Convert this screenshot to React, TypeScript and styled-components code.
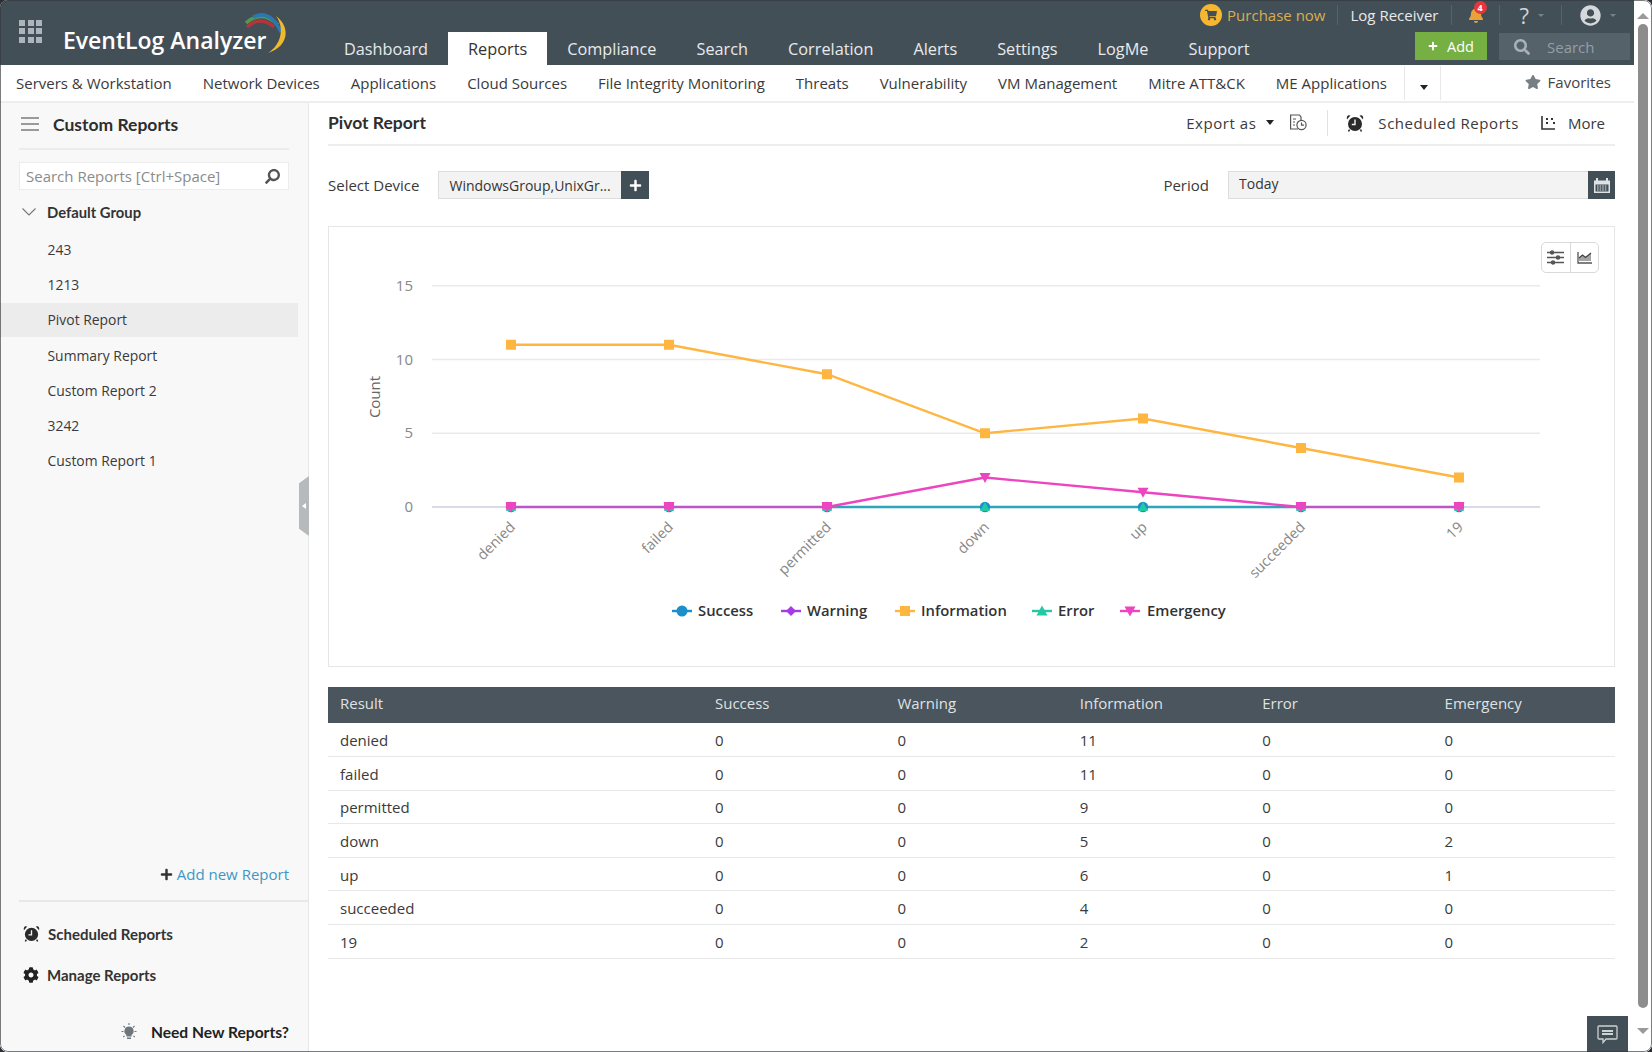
import React from "react";
import styled, { createGlobalStyle } from "styled-components";
import { FaCog, FaStar, FaPlus, FaBell, FaUserCircle, FaShoppingCart, FaSearch } from "react-icons/fa";

const Global = createGlobalStyle`
  html, body { margin: 0; padding: 0; background: #2b2f33; overflow: hidden; }
  * { box-sizing: border-box; }
  body { font-family: "Open Sans", "Liberation Sans", sans-serif; color: #3c3c3c; font-size: 14px; }
`;

const Frame = styled.div`
  width: 1652px; height: 1052px; display: flex; background: #fff;
  border-radius: 8px; overflow: hidden; position: relative;
  &::after {
    content: ""; position: absolute; inset: 0; border: 1px solid rgba(50, 55, 60, .65); border-radius: 8px; pointer-events: none;
  }
`;
const Main = styled.div`width: 1634px; height: 1052px; display: flex; flex-direction: column;`;

const Header = styled.header`height: 65px; background: #434f57; display: flex; flex-shrink: 0;`;
const Brand = styled.div`width: 324px; display: flex; align-items: center; padding-left: 19px; gap: 21px; flex-shrink: 0; position: relative;`;
const GridIcon = styled.div`
  display: grid; grid-template-columns: repeat(3, 6px); grid-auto-rows: 6px; gap: 2.5px; margin-top: -3px;
  span { background: #aeb5ba; }
`;
const Wordmark = styled.div`font-size: 23px; font-weight: 600; color: #fff; margin-top: 14px; white-space: nowrap;`;
const Swoosh = styled.svg`position: absolute; left: 240px; top: 10px;`;
const Tabs = styled.nav`display: flex; align-self: flex-end; height: 33px; flex-shrink: 0;`;
const Tab = styled.div<{ $active?: boolean }>`
  padding: 0 20px; font-size: 16.3px; display: flex; align-items: center; white-space: nowrap;
  color: ${p => (p.$active ? "#333" : "#e8eaeb")}; background: ${p => (p.$active ? "#fff" : "transparent")};
`;
const HeaderRight = styled.div`flex: 1; min-width: 0; display: flex; flex-direction: column; align-items: flex-end;`;
const TopRow = styled.div`height: 32px; display: flex; align-items: center; flex-shrink: 0; padding-right: 13px; padding-bottom: 2px; white-space: nowrap;`;
const TopDivider = styled.span`width: 1px; height: 20px; background: #56626a; margin: 0 12px;`;
const CartBadge = styled.span`
  width: 22px; height: 22px; border-radius: 50%; background: #f5b72f; color: #434f57;
  display: flex; align-items: center; justify-content: center; font-size: 12px; margin-right: 5px;
`;
const PurchaseText = styled.span`color: #d9ad52; font-size: 15px;`;
const LogReceiver = styled.span`color: #e8eaeb; font-size: 15px;`;
const BellWrap = styled.span`position: relative; color: #e9a13a; font-size: 16px; display: flex; margin: 0 3px 0 4px;`;
const BellBadge = styled.span`
  position: absolute; left: 6px; top: -6px; width: 13px; height: 13px; border-radius: 50%; background: #e8353c;
  color: #fff; font-size: 9px; font-weight: 700; display: flex; align-items: center; justify-content: center;
`;
const Help = styled.span`color: #cfd4d7; font-size: 22px; line-height: 1; margin-left: 8px;`;
const TinyCaret = styled.span`
  width: 0; height: 0; border: 3px solid transparent; border-top-color: #77838a; margin: 3px 5px 0 9px;
`;
const Avatar = styled.span`color: #d5d9dc; font-size: 21px; display: flex; margin-left: 6px;`;
const BottomRow = styled.div`display: flex; gap: 12px; padding-right: 4px; align-items: flex-end;`;
const AddButton = styled.div`
  width: 72px; height: 28px; background: #76b043; color: #fff; display: flex; align-items: center;
  justify-content: center; gap: 9px; font-size: 14.5px; svg { font-size: 10px; }
`;
const SearchBox = styled.div`
  width: 131px; height: 27px; background: #56626a; color: #949ea4; display: flex; align-items: center;
  padding-left: 15px; gap: 17px; font-size: 15px; svg { font-size: 16px; color: #a9b1b6; }
`;

const SubNav = styled.nav`
  height: 38px; display: flex; align-items: center; padding-left: 16px; gap: 31px;
  border-bottom: 2px solid #eeeeee; flex-shrink: 0; background: #fff;
`;
const SubItem = styled.span`font-size: 15px; color: #3a3a3a; white-space: nowrap;`;
const MoreCaretCell = styled.div`
  width: 37px; height: 34px; border-left: 1px solid #e8e8e8; border-right: 1px solid #e8e8e8;
  display: flex; align-items: center; justify-content: center; margin-left: -14px; padding-top: 8px; padding-left: 2px;
`;
const DarkCaret = styled.span`width: 0; height: 0; border: 4.5px solid transparent; border-top: 5px solid #222; border-bottom: 0;`;
const Favorites = styled.div`
  margin-left: auto; padding: 0 23px 2px 0; display: flex; align-items: center; gap: 7px; font-size: 15px; color: #444;
  svg { color: #777e84; font-size: 16px; }
`;

const Body = styled.div`flex: 1; display: flex; min-height: 0;`;
const Sidebar = styled.aside`
  width: 309px; flex-shrink: 0; background: #f8f8f8; border-right: 1px solid #e6e6e6;
  display: flex; flex-direction: column; position: relative;
`;
const SideHead = styled.div`
  margin-left: 19px; width: 270px; height: 47px; display: flex; align-items: center; gap: 14px; padding: 0 0 3px 2px;
  border-bottom: 2px solid #ebebeb;
`;
const Burger = styled.div`
  width: 18px; display: flex; flex-direction: column; gap: 4px;
  span { height: 2px; background: #9a9a9a; }
`;
const SideTitle = styled.div`font-family: Lato, sans-serif; font-size: 17.5px; font-weight: 700; color: #2e2e2e;`;
const SideSearch = styled.div`
  margin: 12px 0 0 19px; width: 270px; height: 28px; background: #fff; border: 1px solid #ececec;
  display: flex; align-items: center; justify-content: space-between; padding: 0 8px 0 6px;
  font-size: 15px; color: #8b8b8b; svg { color: #555; font-size: 15px; transform: scaleX(-1); }
`;
const GroupRow = styled.div`
  height: 30px; margin-top: 7px; display: flex; align-items: center; gap: 11px; padding-left: 22px;
  font-family: Lato, sans-serif; font-weight: 700; font-size: 14.8px; color: #333;
`;
const ItemList = styled.div`display: flex; flex-direction: column; gap: 2px; margin-top: 6px; width: 298px;`;
const Item = styled.div<{ $active?: boolean }>`
  height: 33.2px; padding-left: 47.5px; display: flex; align-items: center; font-size: 13.9px; color: #3a3a3a;
  background: ${p => (p.$active ? "#ececec" : "transparent")};
`;
const SideFoot = styled.div`margin-top: auto;`;
const AddLink = styled.div`
  height: 38px; padding: 0 19px 14px 0; display: flex; align-items: center; justify-content: flex-end; gap: 4px;
  color: #3d97c4; font-size: 15px; svg { color: #333; font-size: 13px; }
`;
const FootDivider = styled.div`height: 2px; background: #e8e8e8; margin-left: 19px;`;
const FootLink = styled.div`
  height: 41px; display: flex; align-items: center; gap: 8px; padding-left: 23px;
  font-family: Lato, sans-serif; font-weight: 700; font-size: 15px; color: #333; svg { flex-shrink: 0; color: #222; }
`;
const FootLinks = styled.div`padding-top: 11px; display: flex; flex-direction: column;`;
const NeedNew = styled.div`
  height: 40px; margin-top: 17px; padding: 0 19px 1px 0; display: flex; align-items: center; justify-content: flex-end; gap: 13px;
  font-family: Lato, sans-serif; font-weight: 700; font-size: 15.6px; color: #222;
`;
const Handle = styled.div`
  position: absolute; left: 299px; top: 373px; width: 10px; height: 60px; background: #b7babc;
  clip-path: polygon(100% 0, 100% 100%, 0 88%, 0 12%);
  display: flex; align-items: center; justify-content: center;
  &::after { content: ""; border: 3px solid transparent; border-right: 4px solid #fff; border-left: 0; }
`;

const Content = styled.main`flex: 1; padding: 0 19px; display: flex; flex-direction: column; min-width: 0;`;
const TitleRow = styled.div`height: 43px; display: flex; align-items: center; border-bottom: 2px solid #eeeeee; flex-shrink: 0; padding-bottom: 2px;`;
const PageTitle = styled.h1`font-family: Lato, sans-serif; font-size: 17.5px; font-weight: 700; color: #2e2e2e; margin: 0;`;
const Actions = styled.div`margin-left: auto; display: flex; align-items: center; padding-right: 10px; font-size: 15px; color: #3a3a3a; letter-spacing: .55px;`;
const ActionDivider = styled.span`width: 1px; height: 26px; background: #e2e2e2; margin: 0 18px 0 20px;`;
const FilterRow = styled.div`height: 28px; margin-top: 25px; display: flex; align-items: center; flex-shrink: 0;`;
const FilterLabel = styled.span`font-size: 15px; color: #3a3a3a;`;
const DeviceBox = styled.div`
  width: 183px; height: 28px; margin-left: 19px; background: #f3f3f3; border: 1px solid #dddddd; border-right: 0;
  display: flex; align-items: center; padding-left: 10px; font-size: 14px; color: #333; white-space: nowrap;
`;
const DarkButton = styled.div<{ $w?: number }>`
  width: ${p => p.$w ?? 28}px; height: 28px; background: #434f57; color: #fff; display: flex; align-items: center; justify-content: center;
  font-size: 13px;
`;
const PeriodLabel = styled(FilterLabel)`margin-left: auto; margin-right: 19px;`;
const PeriodBox = styled.div`
  width: 360px; height: 28px; background: #f3f3f3; border: 1px solid #dddddd; border-right: 0;
  display: flex; align-items: center; padding: 0 0 3px 10px; font-size: 14px; color: #333;
`;
const ChartCard = styled.section`
  margin-top: 27px; height: 441px; border: 1px solid #e6e6e6; position: relative; flex-shrink: 0;
  svg.plot { display: block; }
`;
const ChartTools = styled.div`
  position: absolute; right: 15px; top: 15px; width: 58px; height: 31px; border: 1px solid #d9d9d9; border-radius: 5px;
  display: flex; background: #fff;
`;
const ChartTool = styled.div`
  flex: 1; display: flex; align-items: center; justify-content: center; color: #555;
  & + & { border-left: 1px solid #d9d9d9; }
`;
const Table = styled.table`
  margin-top: 20px; width: 100%; table-layout: fixed; border-collapse: collapse; font-size: 15px; color: #3a3a3a;
`;
const Th = styled.th<{ $w?: number }>`
  height: 36px; background: #4a555d; color: #dfe2e4; font-weight: 400; text-align: left; padding: 0 0 4px 12px;
  ${p => (p.$w ? `width: ${p.$w}px;` : "")}
`;
const Td = styled.td`height: 33.6px; padding: 1px 0 0 12px; border-bottom: 1px solid #e8e8e8;`;

const Scrollbar = styled.div`width: 18px; height: 1052px; background: #fff; display: flex; flex-direction: column; align-items: center; position: relative;`;
const ArrowUp = styled.span`width: 0; height: 0; margin-top: 13px; border: 6px solid transparent; border-bottom: 6px solid #9a9a9a; border-top: 0;`;
const Thumb = styled.div`width: 10px; height: 984px; margin-top: 5px; border-radius: 5px; background: #8d8d8d;`;
const ArrowDown = styled.span`width: 0; height: 0; margin-top: 20px; border: 6px solid transparent; border-top: 6px solid #9a9a9a; border-bottom: 0;`;
const ChatButton = styled.div`
  position: absolute; left: 1587px; top: 1016px; width: 41px; height: 36px; background: #434f57;
  display: flex; align-items: center; justify-content: center;
`;
const ExportLabel = styled.span`margin-right: 10px;`;
const ExportCaret = styled(DarkCaret)`margin-right: 15px;`;
const ScheduledLabel = styled.span`margin: 0 22px 0 14px;`;
const MoreLabel = styled.span`margin-left: 12px; letter-spacing: 0;`;

const Alarm = ({ size = 18 }: { size?: number }) => (
  <svg width={size} height={size} viewBox="0 0 18 18" fill="#2a2a2a">
    <circle cx="9" cy="10" r="7" />
    <path d="M1 5.5 4.5 1.5 2.2 1.2C1 2 .5 3.5 1 5.5ZM17 5.5 13.5 1.5 15.8 1.2C17 2 17.5 3.5 17 5.5Z" />
    <path d="M3.5 15.5 2.5 17.5M14.5 15.5 15.5 17.5" stroke="#2a2a2a" strokeWidth="1.6" />
    <path d="M9 5.5V10.5H5.8" stroke="#f4f4f4" strokeWidth="1.4" fill="none" />
  </svg>
);
const ReportClock = () => (
  <svg width="18" height="17" viewBox="0 0 18 17" fill="none" stroke="#555" strokeWidth="1.2">
    <path d="M9 15H1.6V1H10.5L12 3V6" />
    <path d="M4 5H7M4 8H6M4 11H6" />
    <circle cx="12.5" cy="11" r="4.6" />
    <path d="M12.5 8.5V11.2H15" />
  </svg>
);
const MoreIcon = () => (
  <svg width="15" height="15" viewBox="0 0 15 15" fill="none" stroke="#333" strokeWidth="1.6">
    <path d="M1 1V14H14" />
    <path d="M5 4H7M10 4H12M5 8H7M12 8H14" strokeWidth="2" />
  </svg>
);
const Calendar = () => (
  <svg width="18" height="17" viewBox="0 0 18 17" fill="none">
    <path d="M1 3.5H17V16H1Z" fill="#dfe3e5" />
    <path d="M4 1V5M14 1V5" stroke="#dfe3e5" strokeWidth="2" />
    <path d="M2.5 7.5H15.5V14.5H2.5Z" fill="#434f57" />
    <path d="M4 9H14M4 11H14M4 13H14" stroke="#dfe3e5" strokeDasharray="1.6 1" />
  </svg>
);
const Sliders = () => (
  <svg width="17" height="15" viewBox="0 0 17 15" fill="none" stroke="#555" strokeWidth="1.3">
    <path d="M0 2.5H17M0 7.5H17M0 12.5H17" />
    <circle cx="5" cy="2.5" r="1.6" fill="#555" />
    <circle cx="11" cy="7.5" r="1.6" fill="#555" />
    <circle cx="6" cy="12.5" r="1.6" fill="#555" />
  </svg>
);
const AreaIcon = () => (
  <svg width="15" height="13" viewBox="0 0 15 13" fill="none">
    <path d="M1 1V12H15" stroke="#555" strokeWidth="1.3" />
    <path d="M2 10V7L5.5 4L8.5 6.5L14 2V10Z" fill="#a5a5a5" />
    <path d="M2 7L5.5 4L8.5 6.5L14 2" stroke="#444" strokeWidth="1.3" />
  </svg>
);
const Bulb = () => (
  <svg width="18" height="18" viewBox="0 0 18 18" fill="#6f767b">
    <path d="M9 3.5a4.6 4.6 0 0 0-2.6 8.4V13.5h5.2V11.9A4.6 4.6 0 0 0 9 3.5Z" />
    <path d="M7 14.5h4V16H7Z" />
    <path d="M9 0V2M1.5 8.5H3.5M14.5 8.5H16.5M3.5 3L5 4.5M14.5 3 13 4.5M3.2 14 4.6 12.8M14.8 14 13.4 12.8" stroke="#6f767b" strokeWidth="1.1" />
  </svg>
);
const Chat = () => (
  <svg width="21" height="19" viewBox="0 0 21 19" fill="none" stroke="#cdd2d5" strokeWidth="1.3">
    <path d="M2 1H19C19.6 1 20 1.4 20 2V13C20 13.6 19.6 14 19 14H9L6 17.5V14H2C1.4 14 1 13.6 1 13V2C1 1.4 1.4 1 2 1Z" />
    <path d="M5 6H16M5 9H16" strokeWidth="1.8" />
  </svg>
);
const Chevron = () => (
  <svg width="14" height="8" viewBox="0 0 14 8" fill="none" stroke="#777" strokeWidth="1.1">
    <path d="M.5.5 7 7 13.5.5" />
  </svg>
);

const xs = [511, 669, 827, 985, 1143, 1301, 1459];
const cats = ["denied", "failed", "permitted", "down", "up", "succeeded", "19"];
const y0 = 507;
const yv = (v: number) => y0 - v * 14.75;
const rows: [string, number, number, number, number, number][] = [
  ["denied", 0, 0, 11, 0, 0],
  ["failed", 0, 0, 11, 0, 0],
  ["permitted", 0, 0, 9, 0, 0],
  ["down", 0, 0, 5, 0, 2],
  ["up", 0, 0, 6, 0, 1],
  ["succeeded", 0, 0, 4, 0, 0],
  ["19", 0, 0, 2, 0, 0],
];
const colors = { s: "#1c8ec9", w: "#a63ae6", i: "#ffb640", e: "#21c9a5", m: "#ec45c0" };
const path = (k: number) => rows.map((r, i) => `${i ? "L" : "M"}${xs[i]} ${yv(r[k] as number)}`).join(" ");
const triUp = (x: number, y: number, r = 5.5) => `${x},${y - r} ${x + r},${y + r - 1} ${x - r},${y + r - 1}`;
const triDown = (x: number, y: number, r = 5.5) => `${x},${y + r} ${x + r},${y - r + 1} ${x - r},${y - r + 1}`;
const diamond = (x: number, y: number, r = 5) => `${x},${y - r} ${x + r},${y} ${x},${y + r} ${x - r},${y}`;

const legend = [
  { n: "Success", x: 672, tx: 698, c: colors.s, m: "c" },
  { n: "Warning", x: 781, tx: 807, c: colors.w, m: "d" },
  { n: "Information", x: 895, tx: 921, c: colors.i, m: "s" },
  { n: "Error", x: 1032, tx: 1058, c: colors.e, m: "u" },
  { n: "Emergency", x: 1120, tx: 1147, c: colors.m, m: "v" },
];

const Chart = () => (
  <svg className="plot" width="1285" height="439" viewBox="329 227 1285 439" fontFamily="'Open Sans', sans-serif">
    {[15, 10, 5].map(v => <line key={v} x1="432" x2="1540" y1={yv(v)} y2={yv(v)} stroke="#e9e9ee" strokeWidth="1.5" />)}
    <line x1="432" x2="1540" y1={y0} y2={y0} stroke="#d9dbe8" strokeWidth="2" />
    {[15, 10, 5, 0].map(v => <text key={v} x="413" y={yv(v) + 5} textAnchor="end" fontSize="15" fill="#888">{v}</text>)}
    <text transform="translate(380 397) rotate(-90)" textAnchor="middle" fontSize="15" fill="#666">Count</text>
    {cats.map((c, i) => (
      <text key={c} transform={`translate(${xs[i] + 5} 528) rotate(-45)`} textAnchor="end" fontSize="14.5" fill="#888">{c}</text>
    ))}
    <path d={path(2)} fill="none" stroke={colors.w} strokeWidth="2" />
    <path d={`M${xs[2]} ${y0} L${xs[5]} ${y0}`} fill="none" stroke="#2ba6bd" strokeWidth="2.4" />
    <path d={`M${xs[0]} ${y0} L${xs[2]} ${y0} M${xs[5]} ${y0} L${xs[6]} ${y0}`} fill="none" stroke="#bb55c8" strokeWidth="2.4" />
    <path d={path(3)} fill="none" stroke={colors.i} strokeWidth="2.4" />
    <path d={`M${xs[2]} ${y0} L${xs[3]} ${yv(2)} L${xs[4]} ${yv(1)} L${xs[5]} ${y0}`} fill="none" stroke={colors.m} strokeWidth="2.4" />
    {xs.map((x, i) => (
      <g key={x}>
        <circle cx={x} cy={y0} r="5.2" fill={colors.s} />
        <polygon points={triUp(x, y0, 5)} fill={colors.e} />
        <rect x={xs[i] - 5} y={yv(rows[i][3]) - 5} width="10" height="10" fill={colors.i} />
        {rows[i][5] === 0 && (i < 3 || i > 4) && <rect x={x - 5} y={y0 - 5} width="10" height="7" fill={colors.m} />}
        <polygon points={triDown(x, yv(rows[i][5]))} fill={colors.m} />
      </g>
    ))}
    {legend.map(l => (
      <g key={l.n}>
        <line x1={l.x} x2={l.x + 20} y1="611" y2="611" stroke={l.c} strokeWidth="2.4" />
        {l.m === "c" && <circle cx={l.x + 10} cy="611" r="5.5" fill={l.c} />}
        {l.m === "d" && <polygon points={diamond(l.x + 10, 611)} fill={l.c} />}
        {l.m === "s" && <rect x={l.x + 5} y="606" width="10" height="10" fill={l.c} />}
        {l.m === "u" && <polygon points={triUp(l.x + 10, 611)} fill={l.c} />}
        {l.m === "v" && <polygon points={triDown(l.x + 10, 611)} fill={l.c} />}
        <text x={l.tx} y="616" fontSize="14.8" fontWeight="600" fill="#333">{l.n}</text>
      </g>
    ))}
  </svg>
);

const tabs = ["Dashboard", "Reports", "Compliance", "Search", "Correlation", "Alerts", "Settings", "LogMe", "Support"];
const subs = ["Servers & Workstation", "Network Devices", "Applications", "Cloud Sources", "File Integrity Monitoring", "Threats", "Vulnerability", "VM Management", "Mitre ATT&CK", "ME Applications"];
const reports = ["243", "1213", "Pivot Report", "Summary Report", "Custom Report 2", "3242", "Custom Report 1"];
const heads = ["Result", "Success", "Warning", "Information", "Error", "Emergency"];

export default function App() {
  return (
    <Frame>
      <Global />
      <Main>
        <Header>
          <Brand>
            <GridIcon>{Array.from({ length: 9 }, (_, i) => <span key={i} />)}</GridIcon>
            <Wordmark>EventLog Analyzer</Wordmark>
            <Swoosh width="50" height="48" viewBox="240 10 50 48" fill="none">
              <path d="M247 27Q260 15 274 27" stroke="#b5343c" strokeWidth="3.5" />
              <path d="M246 23Q262 9 278 25" stroke="#4d9a55" strokeWidth="3.5" />
              <path d="M253 17Q270 9 281 32" stroke="#2a78b0" strokeWidth="3.5" />
              <path d="M276 16C290 26 290 46 268 53C281 45 285 28 276 16Z" fill="#eeb92f" />
            </Swoosh>
          </Brand>
          <Tabs>
            {tabs.map(t => <Tab key={t} $active={t === "Reports"}>{t}</Tab>)}
          </Tabs>
          <HeaderRight>
            <TopRow>
              <CartBadge><FaShoppingCart /></CartBadge>
              <PurchaseText>Purchase now</PurchaseText>
              <TopDivider />
              <LogReceiver>Log Receiver</LogReceiver>
              <TopDivider />
              <BellWrap><FaBell /><BellBadge>4</BellBadge></BellWrap>
              <TopDivider />
              <Help>?</Help>
              <TinyCaret />
              <TopDivider />
              <Avatar><FaUserCircle /></Avatar>
              <TinyCaret />
            </TopRow>
            <BottomRow>
              <AddButton><FaPlus />Add</AddButton>
              <SearchBox><FaSearch />Search</SearchBox>
            </BottomRow>
          </HeaderRight>
        </Header>
        <SubNav>
          {subs.map(s => <SubItem key={s}>{s}</SubItem>)}
          <MoreCaretCell><DarkCaret /></MoreCaretCell>
          <Favorites><FaStar />Favorites</Favorites>
        </SubNav>
        <Body>
          <Sidebar>
            <SideHead>
              <Burger><span /><span /><span /></Burger>
              <SideTitle>Custom Reports</SideTitle>
            </SideHead>
            <SideSearch>Search Reports [Ctrl+Space]<FaSearch /></SideSearch>
            <GroupRow><Chevron />Default Group</GroupRow>
            <ItemList>
              {reports.map(r => <Item key={r} $active={r === "Pivot Report"}>{r}</Item>)}
            </ItemList>
            <SideFoot>
              <AddLink><FaPlus />Add new Report</AddLink>
              <FootDivider />
              <FootLinks>
                <FootLink><Alarm size={17} />Scheduled Reports</FootLink>
                <FootLink><FaCog size={16} />Manage Reports</FootLink>
              </FootLinks>
              <NeedNew><Bulb />Need New Reports?</NeedNew>
            </SideFoot>
            <Handle />
          </Sidebar>
          <Content>
            <TitleRow>
              <PageTitle>Pivot Report</PageTitle>
              <Actions>
                <ExportLabel>Export as</ExportLabel>
                <ExportCaret />
                <ReportClock />
                <ActionDivider />
                <Alarm />
                <ScheduledLabel>Scheduled Reports</ScheduledLabel>
                <MoreIcon />
                <MoreLabel>More</MoreLabel>
              </Actions>
            </TitleRow>
            <FilterRow>
              <FilterLabel>Select Device</FilterLabel>
              <DeviceBox>WindowsGroup,UnixGr...</DeviceBox>
              <DarkButton><FaPlus /></DarkButton>
              <PeriodLabel>Period</PeriodLabel>
              <PeriodBox>Today</PeriodBox>
              <DarkButton $w={27}><Calendar /></DarkButton>
            </FilterRow>
            <ChartCard>
              <Chart />
              <ChartTools>
                <ChartTool><Sliders /></ChartTool>
                <ChartTool><AreaIcon /></ChartTool>
              </ChartTools>
            </ChartCard>
            <Table>
              <thead>
                <tr>{heads.map((h, i) => <Th key={h} $w={i === 0 ? 375 : undefined}>{h}</Th>)}</tr>
              </thead>
              <tbody>
                {rows.map(r => (
                  <tr key={r[0]}>{r.map((c, i) => <Td key={i}>{c}</Td>)}</tr>
                ))}
              </tbody>
            </Table>
          </Content>
        </Body>
      </Main>
      <Scrollbar>
        <ArrowUp />
        <Thumb />
        <ArrowDown />
      </Scrollbar>
      <ChatButton><Chat /></ChatButton>
    </Frame>
  );
}
